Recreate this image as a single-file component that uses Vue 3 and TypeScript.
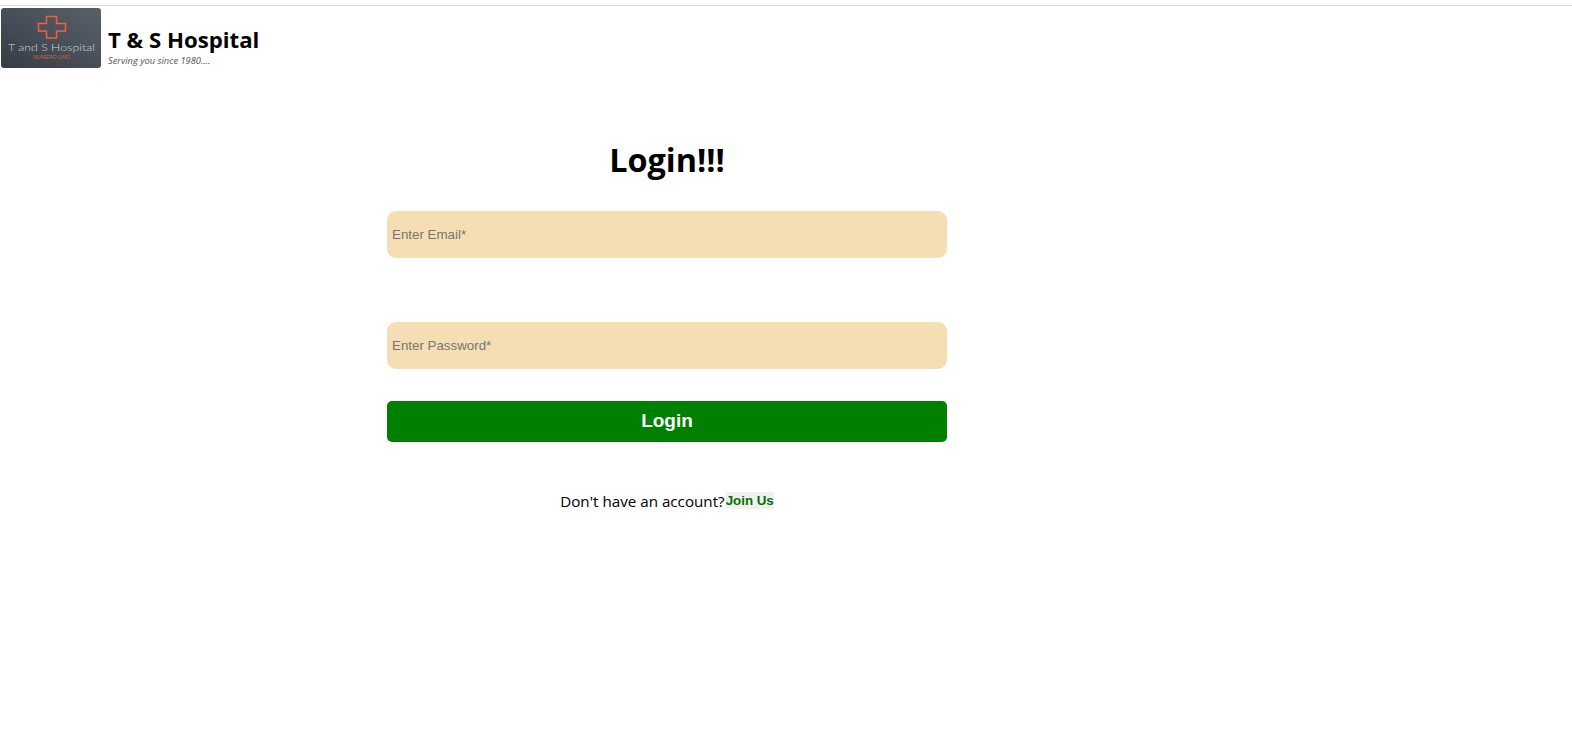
<template>
  <div class="page">
    <header class="brand">
      <svg class="logo" width="100" height="60" viewBox="0 0 100 60">
        <defs>
          <linearGradient id="logoBg" x1="1" y1="0" x2="0" y2="1">
            <stop offset="0" stop-color="#5a616a" />
            <stop offset="1" stop-color="#363c45" />
          </linearGradient>
        </defs>
        <rect width="100" height="60" rx="3" fill="url(#logoBg)" />
        <path
          d="M45.500 8.500h10v7h9v7.500h-9v7h-10v-7h-8v-7.500h8z"
          fill="none"
          stroke="#f0633a"
          stroke-width="1.500"
        />
        <text class="logo-name" x="7" y="43" textLength="87" lengthAdjust="spacingAndGlyphs">T and S Hospital</text>
        <text class="logo-sub" x="32" y="51" textLength="37" lengthAdjust="spacingAndGlyphs">NUMERO UNO</text>
      </svg>
      <div class="brand-text">
        <h2>T &amp; S Hospital</h2>
        <small>Serving you since 1980....</small>
      </div>
    </header>

    <main class="login">
      <h1>Login!!!</h1>
      <form class="fields" @submit.prevent>
        <input v-model="email" type="email" placeholder="Enter Email*" />
        <input v-model="password" class="second" type="password" placeholder="Enter Password*" />
        <button type="submit">Login</button>
      </form>
      <p class="join">Don't have an account?<a href="#">Join Us</a></p>
    </main>
  </div>
</template>

<script setup lang="ts">
import { ref } from 'vue';

const email = ref('');
const password = ref('');
</script>

<style scoped>
.page { min-height:736px; box-sizing:border-box; padding-top:5px; background:#fff; color:#000; font-family:"Open Sans","Noto Sans",sans-serif; }
.brand { display:flex; align-items:flex-end; gap:7px; border-top:1px solid #dedede; padding:2px 0 0 1px; height:63px; box-sizing:border-box; }
.logo { display:block; flex:none; }
.logo-name { font:300 10.500px "Lato",sans-serif; fill:#d6d8db; }
.logo-sub { font:400 4.500px "Liberation Sans",sans-serif; fill:#c9603f; }
.brand-text { display:flex; flex-direction:column; }
.brand-text h2 { margin:0; font-size:22.200px; line-height:30px; font-weight:700; }
.brand-text small { font-size:9.300px; line-height:11px; margin-bottom:2px; font-style:italic; color:#555; }
.login { width:560px; margin:72px 0 0 387px; display:flex; flex-direction:column; align-items:center; }
h1 { margin:-2px 0 0; font-size:32.400px; line-height:42px; font-weight:700; }
.fields { display:flex; flex-direction:column; width:100%; margin-top:31px; }
input { height:47px; box-sizing:border-box; border:0; border-radius:9px; padding:0 5px; background:#f5deb3; font:13.330px "Liberation Sans",sans-serif; outline:none; }
input::placeholder { color:#757575; opacity:1; }
.second { margin-top:64px; }
button { height:41px; margin-top:32px; padding:0 0 2px; border:0; border-radius:5px; background:#008000; color:#fff; font:700 19px "Liberation Sans",sans-serif; }
.join { margin:49px 0 0; font-size:15.200px; line-height:21px; display:flex; align-items:flex-start; }
.join a { color:#007000; background:#f0f0f0; font:700 13.330px/17px "Liberation Sans",sans-serif; text-decoration:none; margin:1px 0 0 1px; }
</style>
